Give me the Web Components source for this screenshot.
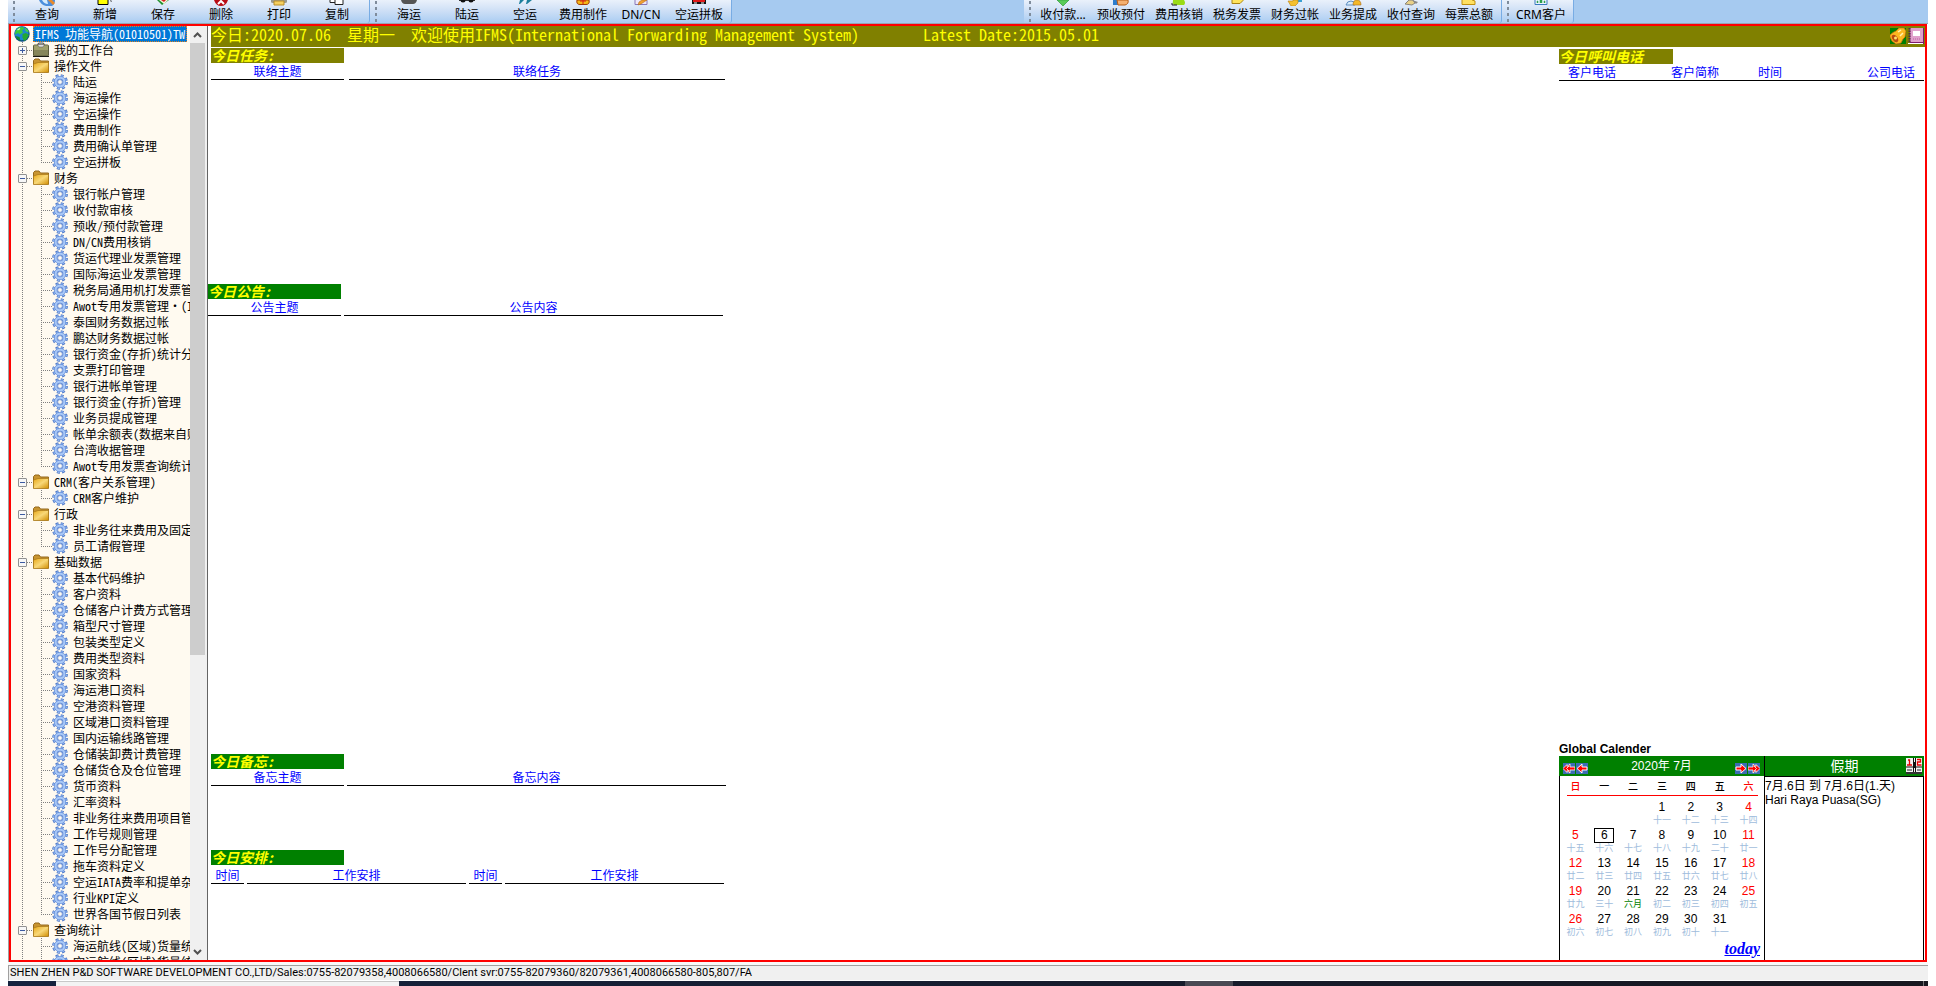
<!DOCTYPE html>
<html lang="zh-CN">
<head>
<meta charset="utf-8">
<title>IFMS</title>
<style>
html, body { height: 100%; }
body {
  margin: 0 8px;
  background: #fff;
  color: #000;
  font: 12px/16px "Noto Sans CJK SC", sans-serif;
  overflow: hidden;
}
</style>
</head>
<body>
<app-shell>
  <tool-bar slot="tools"></tool-bar>
  <nav-tree slot="nav"></nav-tree>
  <welcome-bar slot="banner">今日:2020.07.06  星期一  欢迎使用IFMS(International Forwarding Management System)        Latest Date:2015.05.01</welcome-bar>
  <dash-panel slot="main" class="tasks" heading="今日任务:" tone="olive" cols="联络主题:133,联络任务:376" gap="5"></dash-panel>
  <dash-panel slot="main" class="notices" heading="今日公告:" cols="公告主题:133,公告内容:379" gap="3"></dash-panel>
  <dash-panel slot="main" class="memos" heading="今日备忘:" cols="备忘主题:133,备忘内容:379" gap="3"></dash-panel>
  <dash-panel slot="main" class="plans" heading="今日安排:" cols="时间:33,工作安排:219,时间:33,工作安排:219" gap="3"></dash-panel>
  <dash-panel slot="side" class="calls" heading="今日呼叫电话" tone="olive" cols="客户电话:103,客户简称:87,时间:109,公司电话:66" gap="0" narrow></dash-panel>
  <global-calendar slot="side"></global-calendar>
  <status-bar slot="status">SHEN ZHEN P&amp;D SOFTWARE DEVELOPMENT CO.,LTD/Sales:0755-82079358,4008066580/Clent svr:0755-82079360/82079361,4008066580-805,807/FA</status-bar>
</app-shell>

<script>
const define = (name, render) => customElements.define(name, class extends HTMLElement {
  connectedCallback() {
    if (this.shadowRoot) return;
    this.attachShadow({ mode: 'open' }).innerHTML = render(this);
  }
});

const svg = (w, h, body) => `<svg width="${w}" height="${h}" viewBox="0 0 ${w} ${h}" aria-hidden="true">${body}</svg>`;

/* 16px tree icons */
const TREE_ICONS = {
  globe: svg(16, 16, `<circle cx="8" cy="8" r="7.700" fill="#0a4a86"/><circle cx="7.600" cy="7.400" r="6.900" fill="#1c86d0"/>
    <path d="M1.500 5 4.500 1.500 9 1 10.500 2.500 8 4.500 9 6.500 6 8.500 4 7 1 8.500z" fill="#3cc83c"/>
    <path d="M8.500 8 12 7 15 9 12.500 13.500 10 15 8.500 11.500z" fill="#24a834"/>
    <path d="M11 1.500 14.500 4.500 14.500 6.500 11.500 5z" fill="#48d048"/><path d="M1.500 10 5.500 11 6.500 15 3 13z" fill="#128a2c"/>
    <path d="M3.500 4 6 2.500" stroke="#d8f8d8" stroke-width="1.200"/>`),
  briefcase: svg(16, 16, `<path d="M5 4V2.500Q5 1 6.500 1h3Q11 1 11 2.500V4" fill="#ccc" stroke="#555" stroke-width="1.200"/>
    <rect x=".5" y="3" width="15" height="11" rx="1" fill="#86865a" stroke="#5c5c3c"/>
    <path d="M1 3.500h14V8H1z" fill="#a0a06c"/><path d="M4.500 2.500h7L10 5H6z" fill="#e0e0e0" stroke="#555" stroke-width=".5"/>
    <path d="M0 14.500h16" stroke="#181810"/>`),
  folder: svg(16, 16, `<defs><linearGradient id="f" x1="0" y1="0" x2="1" y2="1"><stop offset="0" stop-color="#e8a818"/><stop offset=".5" stop-color="#f8d878"/><stop offset="1" stop-color="#d08c00"/></linearGradient></defs>
    <path d="M.5 14V2.500L2 1h4l1.500 2h8v11z" fill="#c89430" stroke="#94691c"/>
    <path d="M.5 14.500V6L5 4.500h10.500v10z" fill="url(#f)" stroke="#a87718" stroke-width=".7"/>`),
  gear: svg(16, 16, `<circle cx="8" cy="8" r="6.300" fill="none" stroke="#4a74c4" stroke-width="3.200" stroke-dasharray="2.700 2.248"/>
    <circle cx="8" cy="8" r="6.200" fill="none" stroke="#8fb4ee" stroke-width="2" stroke-dasharray="1.700 3.170" stroke-dashoffset="-.5"/>
    <circle cx="8" cy="8" r="4.300" fill="none" stroke="#5480d6" stroke-width="3.400"/>
    <circle cx="8" cy="8" r="4.400" fill="none" stroke="#a9c8f6" stroke-width="2.200"/>
    <circle cx="8" cy="8" r="2.400" fill="#fffaf0" stroke="#5c84d0" stroke-width=".8"/>`)
};

const TOOL_ICONS = {
  search: '<path d="M1 0q2 5 7 6h6q3-2 3-6z" fill="#4d8fdc"/><path d="M4 0q2 4 6 4l-1-4z" fill="#d8ecfc"/><path d="M10 0l5 5 2-2-3-3z" fill="#e88a2c"/>',
  add: '<path d="M2 0v4.500h10V0" fill="#ff0" stroke="#000"/><path d="M14 0l2 1-1 1z" fill="#222"/>',
  save: '<path d="M3 0l5 5 7-5z" fill="#1f8f2c"/><path d="M5 0l5 4 4-4z" fill="#f4f4d8"/><path d="M7 0l3 2 2-2z" fill="#d82020"/>',
  del: '<path d="M2 0q2 6 7 6t7-6z" fill="#b80c14"/><path d="M6 4l3-3 3 3" stroke="#fff" stroke-width="2" fill="none"/>',
  print: '<path d="M1 0h16v2q0 1-2 1H3Q1 3 1 2z" fill="#9a9a90"/><path d="M4 1h10v4H4z" fill="#f5d060" stroke="#b88c28"/>',
  copy: '<path d="M2 0v2.500h6V0" fill="#fff" stroke="#222"/><path d="M7 0v4.500h8V0" fill="#fff" stroke="#222"/>',
  ship: '<path d="M1 0h16q-1 4-4 4H5Q2 4 1 0z" fill="#555"/>',
  truck: '<path d="M1 0h16v1H1z" fill="#333"/><circle cx="5" cy="0" r="2.500" fill="#111"/><circle cx="13" cy="0" r="2.500" fill="#111"/>',
  plane: '<path d="M4 0h4L4 4H3zM11 0h5l-5 4h-1z" fill="#1c7f9c"/>',
  fee: '<path d="M3 0h12q1 4.500-3 4.500H6Q2 4.500 3 0z" fill="#f4b818" stroke="#a03808"/><path d="M6 1h6M9 0v4" stroke="#d81818"/>',
  note: '<path d="M3 0v4.500h12V0" fill="#eee8fa" stroke="#8878b8"/><path d="M6 5l1-3 3-2h5L9 4z" fill="#f0a030" stroke="#a86010" stroke-width=".5"/>',
  pallet: '<path d="M2 0h14v4H2z" fill="#111"/><path d="M3 0h12v2H3z" fill="#e01818"/><path d="M4 3h3M11 3h3" stroke="#fff"/>',
  pay: '<path d="M3 0h12L9 6z" fill="#58cc58" stroke="#2f9a3c" stroke-width=".7"/>',
  hand: '<path d="M1 0h5v5H1z" fill="#2c7ccc"/><path d="M5 0h11q1 4-3 5H6z" fill="#f4b070" stroke="#b85c14"/>',
  verify: '<path d="M3 0h11q2 3 0 5H4Q2 3 3 0z" fill="#9adc18"/><path d="M2 3v2h5" stroke="#222" fill="none"/>',
  tax: '<path d="M4 0v3.500h8l3-3V0" fill="#ffe45c" stroke="#a88414"/>',
  post: '<path d="M10 0h6v2h-6z" fill="#38a0d4"/><path d="M2 1h5V0h5v3l-3 3H5z" fill="#f4c030" stroke="#b88010" stroke-width=".6"/>',
  people: '<path d="M2 5q1-4 5-4t4 4z" fill="#d8ecfa" stroke="#5c8cc0"/><path d="M9 5q0-5 4-5t4 5z" fill="#f4b828" stroke="#a86818" stroke-width=".6"/>',
  query: '<path d="M3 4l4-4h4l2 3-3 2z" fill="#e8d088" stroke="#88847c"/><path d="M10 0l4 4 2-2z" fill="#888"/>',
  total: '<path d="M2 0v4.500h13V1l-3-1" fill="#ffe060" stroke="#c09010"/>',
  crm: '<path d="M3 0v4.500h12V0" fill="#eaf4ff" stroke="#3878c0"/><path d="M5 3V1h1v2M8 3V0h2v3M12 3V1h1v2" fill="#2ca04c" stroke="#2ca04c" stroke-width=".5"/>'
};

define('app-shell', () => `
<style>
:host { display: grid; height: 100vh; grid-template-rows: auto 1fr auto; }
.frame { display: grid; grid-template-columns: 196px minmax(0, 1fr); min-height: 0;
  margin: 0 1px; border: 2px solid red; box-shadow: -1px 0 #a0a0a0; }
.work { display: flex; flex-direction: column; min-width: 0; border-left: 1px solid #646464; }
.body { display: flex; flex: 1; min-height: 0; justify-content: space-between; padding: 1px 1px 0 0; }
.left, .right { display: flex; flex-direction: column; }
.right { width: 365px; justify-content: space-between; }
::slotted(dash-panel) { padding-left: 3px; }
::slotted(.tasks) { height: 236px; }
::slotted(.notices) { flex: 1; padding-left: 0; }
::slotted(.memos) { height: 96px; }
::slotted(.plans) { height: 110px; --head-pad: 2px; }
::slotted(.calls) { padding: 1px 0 0; }
</style>
<slot name="tools"></slot>
<div class="frame">
  <slot name="nav"></slot>
  <div class="work">
    <slot name="banner"></slot>
    <div class="body">
      <main class="left"><slot name="main"></slot></main>
      <aside class="right"><slot name="side"></slot></aside>
    </div>
  </div>
</div>
<slot name="status"></slot>`);

define('tool-item', el => `
<style>
:host { display: block; width: 58px; }
button { display: flex; flex-direction: column; align-items: center; width: 100%; padding: 0; border: 0;
  background: none; color: #000; font: 12px/17px "Noto Sans", "Noto Sans CJK SC", sans-serif; white-space: nowrap; }
svg { display: block; }
</style>
<button type="button">${svg(18, 6, TOOL_ICONS[el.getAttribute('icon')])}<slot></slot></button>`);

define('tool-group', () => `
<style>
:host { display: flex; box-sizing: border-box; height: 23px; padding-right: 3px; border-right: 1px solid #78ace4;
  border-radius: 0 0 3px 0; background: linear-gradient(#eaf1fb, #cfe0f6 45%, #a9ccf2); }
.grip { width: 10px; background: repeating-linear-gradient(#7f8c9c 0 3px, transparent 3px 6px) 5px 1px / 2px 22px no-repeat; }
</style>
<span class="grip"></span><slot></slot>`);

const TOOLS = [
  ['search:查询', 'add:新增', 'save:保存', 'del:删除', 'print:打印', 'copy:复制'],
  ['ship:海运', 'truck:陆运', 'plane:空运', 'fee:费用制作', 'note:DN/CN', 'pallet:空运拼板'],
  ['pay:收付款...', 'hand:预收预付', 'verify:费用核销', 'tax:税务发票', 'post:财务过帐', 'people:业务提成', 'query:收付查询', 'total:每票总额'],
  ['crm:CRM客户']
];
define('tool-bar', () => `
<style>
:host { display: flex; background: #a6caf0; border-bottom: 1px solid #98a4b0; }
.settle { margin-left: 292px; }
</style>
${TOOLS.map((g, i) => `<tool-group${i === 2 ? ' class="settle"' : ''}>${g.map(t => {
  const [icon, label] = t.split(':');
  return `<tool-item icon="${icon}">${label}</tool-item>`;
}).join('')}</tool-group>`).join('')}`);

define('tree-row', el => {
  const level = +el.getAttribute('level'), label = el.textContent, open = el.hasAttribute('open');
  return `
<style>
:host { display: flex; height: 16px; white-space: nowrap; --dots: repeating-linear-gradient(#808080 0 1px, transparent 1px 2px);
  --dash: repeating-linear-gradient(90deg, #808080 0 1px, transparent 1px 2px); }
svg { display: block; flex: none; }
a { color: #000; text-decoration: none; font-feature-settings: "hwid"; margin-left: 5px; }
.trunk { flex: none; display: flex; align-items: center; box-sizing: border-box; width: 22px; padding-left: 7px; background: var(--dots) 11px 0 / 1px 16px no-repeat; }
.trunk.joint { background: var(--dots) 11px 0 / 1px 16px no-repeat, var(--dash) 12px 8px / 10px 1px no-repeat; }
.branch { flex: none; width: 19px; background: var(--dots) 8px 0 / 1px 16px no-repeat, var(--dash) 8px 8px / 11px 1px no-repeat; }
:host([last]) .branch { background: var(--dots) 8px 0 / 1px 8px no-repeat, var(--dash) 8px 8px / 11px 1px no-repeat; }
button { width: 9px; height: 9px; padding: 0; border: 1px solid #919191; border-radius: 1px;
  background: linear-gradient(#3c5aa0, #3c5aa0) center / 5px 1px no-repeat, #f7f7f7; }
button.plus { background: linear-gradient(#3c5aa0, #3c5aa0) center / 5px 1px no-repeat, linear-gradient(#3c5aa0, #3c5aa0) center / 1px 5px no-repeat, #f7f7f7; }
:host([level="0"]) { padding-left: 3px; }
:host([level="0"]) a { flex: none; margin-left: 3px; padding: 0 2px; background: #0078d7; color: #fff; outline: 1px dotted #e08020; outline-offset: -1px; }
</style>
${level === 1 ? `<span class="trunk joint"><button type="button" aria-label="${open ? '折叠' : '展开'}"${open ? '' : ' class="plus"'}></button></span>` : ''}
${level === 2 ? '<span class="trunk"></span><span class="branch"></span>' : ''}
${TREE_ICONS[el.getAttribute('icon')]}<a href="#">${label}</a>`;
});

const MENU = [
  ['操作文件', ['陆运', '海运操作', '空运操作', '费用制作', '费用确认单管理', '空运拼板']],
  ['财务', ['银行帐户管理', '收付款审核', '预收/预付款管理', 'DN/CN费用核销', '货运代理业发票管理', '国际海运业发票管理', '税务局通用机打发票管', 'Awot专用发票管理・(I', '泰国财务数据过帐', '鹏达财务数据过帐', '银行资金(存折)统计分', '支票打印管理', '银行进帐单管理', '银行资金(存折)管理', '业务员提成管理', '帐单余额表(数据来自财', '台湾收据管理', 'Awot专用发票查询统计']],
  ['CRM(客户关系管理)', ['CRM客户维护']],
  ['行政', ['非业务往来费用及固定', '员工请假管理']],
  ['基础数据', ['基本代码维护', '客户资料', '仓储客户计费方式管理', '箱型尺寸管理', '包装类型定义', '费用类型资料', '国家资料', '海运港口资料', '空港资料管理', '区域港口资料管理', '国内运输线路管理', '仓储装卸费计费管理', '仓储货仓及仓位管理', '货币资料', '汇率资料', '非业务往来费用项目管', '工作号规则管理', '工作号分配管理', '拖车资料定义', '空运IATA费率和提单杂', '行业KPI定义', '世界各国节假日列表']],
  ['查询统计', ['海运航线(区域)货量统', '空运航线(区域)货量统']]
];
define('nav-tree', () => `
<style>
:host { display: flex; min-height: 0; overflow: hidden; background: #f0f0f0; }
nav { width: 179px; overflow: hidden; background: #fffaf0; }
.bar { display: flex; flex-direction: column; width: 15px; background: #f0f0f0; }
.bar button { display: flex; align-items: center; justify-content: center; flex: none; width: 15px; height: 17px; padding: 0; border: 0; background: #f0f0f0; }
.track { flex: 1; }
.thumb { height: 68%; background: #cdcdcd; }
</style>
<nav>
<tree-row level="0" icon="globe">IFMS 功能导航(01010501)TW</tree-row>
<tree-row level="1" icon="briefcase">我的工作台</tree-row>
${MENU.map(([name, items], m) => `<tree-row level="1" icon="folder" open>${name}</tree-row>` +
  items.map((t, i) => `<tree-row level="2" icon="gear"${i === items.length - 1 && m < MENU.length - 1 ? ' last' : ''}>${t}</tree-row>`).join('')).join('')}
</nav>
<div class="bar">
  <button type="button" aria-label="向上">${svg(9, 6, '<path d="M1 5l3.500-3.500L8 5" fill="none" stroke="#505050" stroke-width="2"/>')}</button>
  <div class="track"><div class="thumb"></div></div>
  <button type="button" aria-label="向下">${svg(9, 6, '<path d="M1 1l3.500 3.500L8 1" fill="none" stroke="#505050" stroke-width="2"/>')}</button>
</div>`);

define('welcome-bar', () => `
<style>
:host { display: flex; justify-content: space-between; height: 21px; margin-left: 3px; background: #808000; }
.text { color: #ff0; font-size: 16px; line-height: 16px; white-space: pre; font-feature-settings: "hwid"; }
.icons { display: flex; gap: 2px; padding: 2px 1px 0 0; }
button { width: 16px; height: 16px; padding: 0; border: 0; background: none; }
svg { display: block; }
</style>
<span class="text"><slot></slot></span>
<span class="icons">
<button type="button" aria-label="提醒">${svg(16, 16, `<path d="M0 0h16v16H0z" fill="#008000"/>
 <path d="M0 7Q3 4 6 3l3-3h5l2 3-1 6-2 2-2 4-5 1-4-3-2-4z" fill="#fcb820" stroke="#d06810" stroke-width=".7"/>
 <ellipse cx="5" cy="10.500" rx="2.500" ry="4.200" transform="rotate(-35 5 10.500)" fill="#b84c10"/><circle cx="5.500" cy="10" r="1.500" fill="#fce070"/>
 <path d="M8 4l3-2M10 8l3-3" stroke="#fff4b0" stroke-width="1.500"/>`)}</button>
<button type="button" aria-label="记事本">${svg(16, 16, `<path d="M2 0h14v16H2z" fill="#cc78b4"/><path d="M2 14h13V0h1v16H2z" fill="#7c1c6c"/>
 <path d="M3 0h12v14H3z" fill="#e0a0cc"/><path d="M5 3h7v5H5z" fill="#fff"/><path d="M5 11h7" stroke="#b860a0" stroke-dasharray="1 1"/>
 <path d="M1.500 0v16" stroke="#503048" stroke-width="2" stroke-dasharray="1.500 1"/><path d="M0 15.500h15" stroke="#fff"/>`)}</button>
</span>`);

define('dash-panel', el => {
  const cols = el.getAttribute('cols').split(',').map(c => c.split(':'));
  const gap = el.getAttribute('gap');
  return `
<style>
:host { display: block; box-sizing: border-box; }
h2 { width: ${el.hasAttribute('narrow') ? 114 : 133}px; height: 15px; margin: 0;
  background: ${el.getAttribute('tone') === 'olive' ? '#808000' : '#008000'}; color: #ff0; font: italic bold 14px/15px "Noto Sans CJK SC", sans-serif; font-feature-settings: "hwid"; }
table { table-layout: fixed; width: 1px; margin: var(--head-pad, 0) -${gap}px 0; border-spacing: ${gap}px 0; }
th { padding: 0; border-bottom: 1px solid #000; color: #00f; font-weight: normal; line-height: 16px; white-space: nowrap;
  ${el.hasAttribute('narrow') ? 'text-align: left; text-indent: 9px;' : ''} }
</style>
<h2>${el.getAttribute('heading')}</h2>
<table><colgroup>${cols.map(c => `<col style="width:${c[1]}px">`).join('')}</colgroup>
<thead><tr>${cols.map(c => `<th scope="col">${c[0]}</th>`).join('')}</tr></thead></table>`;
});

const LUNAR = '十一 十二 十三 十四 十五 十六 十七 十八 十九 二十 廿一 廿二 廿三 廿四 廿五 廿六 廿七 廿八 廿九 三十 六月 初二 初三 初四 初五 初六 初七 初八 初九 初十 十一'.split(' ');
const weeks = () => {
  let out = '';
  for (let w = 0; w < 5; w++) {
    out += '<tr>';
    for (let d = 0; d < 7; d++) {
      const n = w * 7 + d - 2;
      out += n < 1 || n > 31 ? '<td></td>'
        : `<td><span class="day${n === 6 ? ' now' : ''}">${n}</span><span class="lunar${n === 21 ? ' first' : ''}">${LUNAR[n - 1]}</span></td>`;
    }
    out += '</tr>';
  }
  return out;
};
const arrow = (double, flip) => svg(12, 11, `<g${flip ? ' transform="matrix(-1 0 0 1 12 0)"' : ''}><path d="M0 0h12v11H0z" fill="#3c6cb4"/>
 ${double ? '<path d="M0 5.500 4 1.500v2L7 1v3h5v3H7v3L4 7.500v2z" fill="#f00" stroke="#fff" stroke-width=".8"/><path d="M6 3 3.500 5.500 6 8" stroke="#fff" fill="none" stroke-width=".8"/>' : '<path d="M1 5.500 6 1v3h5v3H6v3z" fill="#f00" stroke="#fff"/>'}</g>`);

define('global-calendar', () => `
<style>
:host { display: grid; grid-template-columns: 205px 1px 1fr; grid-template-rows: 13px 20px 184px; font-family: "Liberation Sans", "Noto Sans CJK SC", sans-serif; }
h2 { grid-column: 1 / -1; margin: 0; font-size: 12px; line-height: 13px; }
.head { display: flex; align-items: center; justify-content: space-between; padding: 0 4px; background: #008000; color: #fff; font-size: 12px; line-height: 20px; }
.head div { display: flex; padding-top: 4px; gap: 1px; }
.head.off { padding: 0 2px 0 18px; font-size: 14px; }
.off span { flex: 1; text-align: center; }
.rule { background: #000; }
button { padding: 0; border: 0; background: none; }
svg { display: block; }
.month { display: flex; flex-direction: column; box-sizing: border-box; padding: 0 1px; border-left: 1px solid #000; }
table { width: 100%; table-layout: fixed; border-spacing: 0; text-align: center; background: linear-gradient(red, red) 6px 19px / 191px 1px no-repeat; }
th { height: 24px; box-sizing: border-box; padding: 1px 0 3px; font-size: 10px; line-height: 20px; font-weight: 500; vertical-align: top; }
td { height: 28px; padding: 0; vertical-align: top; }
tr > :first-child, tr > :last-child { color: red; }
.day { display: block; width: 20px; margin: 0 auto; font-size: 12px; line-height: 15px; }
.now { outline: 1px solid #000; outline-offset: -1px; }
.lunar { display: block; font-size: 9px; line-height: 10px; color: #a0bcdc; white-space: nowrap; }
.first { color: #008000; }
a { align-self: flex-end; margin-right: 3px; color: #00f; font: italic bold 16px/18px "Liberation Serif", serif; }
.days { box-sizing: border-box; border: solid #000; border-width: 1px 1px 0 0; font-size: 12px; line-height: 14px; padding-top: 2px; }
p { margin: 0; white-space: nowrap; }
</style>
<h2>Global Calender</h2>
<div class="head"><div><button type="button" aria-label="上一年">${arrow(true)}</button><button type="button" aria-label="上一月">${arrow(false)}</button></div>
<span>2020年 7月</span>
<div><button type="button" aria-label="下一月">${arrow(false, true)}</button><button type="button" aria-label="下一年">${arrow(true, true)}</button></div></div>
<div class="rule"></div>
<div class="head off"><span>假期</span><button type="button" aria-label="日历">${svg(16, 16, `<path d="M0 0h16v14H0z" fill="#f4f4f4"/><path d="M0 14h16v2H0z" fill="#333"/>
 <path d="M7 0h1v4h1V0h1v14H9v-4H8v4H7z" fill="#111"/><path d="M2 2h1.500v5M1 7h5M11 1.500h3.500v2.500h-3v3h4" fill="none" stroke="#e80000" stroke-width="1.300"/>
 <path d="M0 9h16" stroke="#111"/><path d="M1 12h5M11 12h4" stroke="#222"/>`)}</button></div>
<div class="month">
<table><thead><tr>${[...'日一二三四五六'].map(d => `<th scope="col">${d}</th>`).join('')}</tr></thead><tbody>${weeks()}</tbody></table>
<a href="#">today</a>
</div>
<div class="rule"></div>
<div class="days"><p>7月.6日 到 7月.6日(1.天)</p><p>Hari Raya Puasa(SG)</p></div>`);

define('status-bar', () => `
<style>
:host { display: block; padding-top: 3px; background: #f8f8f8; }
.line { height: 14px; padding-left: 1px; border-top: 1px solid #a0a0a0; border-left: 1px solid #a0a0a0; border-bottom: 1px solid #fff; background: #f0f0f0;
  font: 11px/14px Roboto, "Noto Sans CJK SC", sans-serif; white-space: nowrap; }
.desk { display: flex; height: 5px; background: linear-gradient(90deg, #16233f, #171c2c 60%, #181820); }
.desk i { flex: none; height: 5px; }
.field { width: 343px; margin-left: 48px; background: #f3f3f3; box-shadow: inset 0 1px #c8c8c8; }
.active { width: 48px; margin-left: 786px; background: #4a4a54; }
.peek { width: 1px; margin: 0 4px 0 auto; background: #777; }
</style>
<div class="line"><slot></slot></div>
<div class="desk"><i class="field"></i><i class="active"></i><i class="peek"></i></div>`);
</script>
</body>
</html>
